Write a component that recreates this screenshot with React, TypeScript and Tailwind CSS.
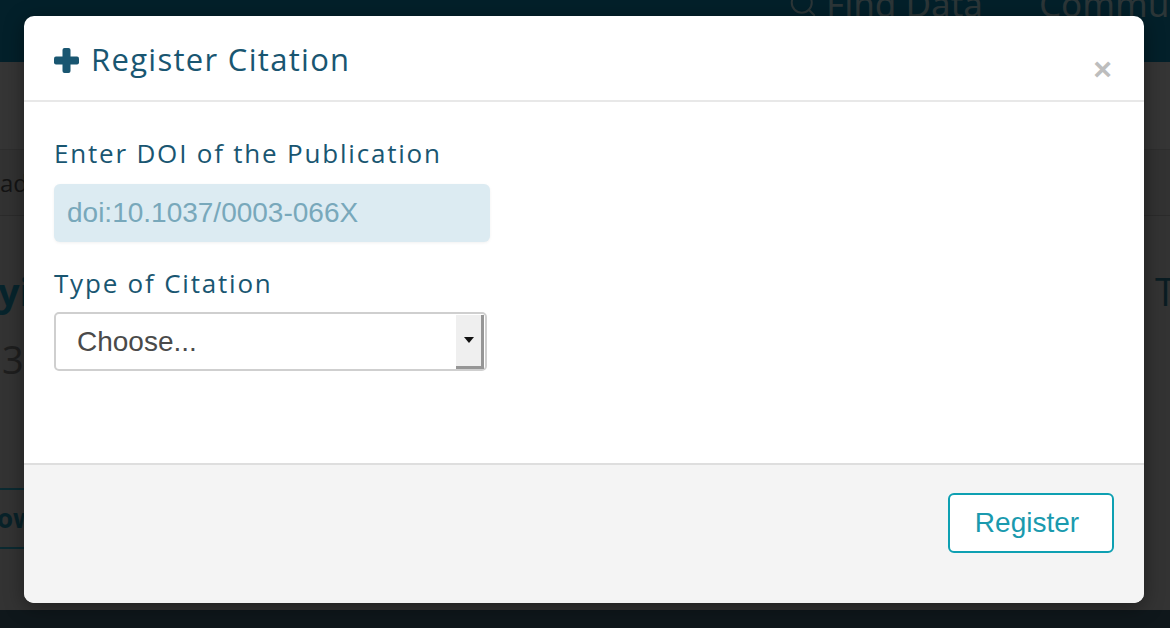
import { Search } from 'lucide-react';

const workSans = { fontFamily: '"Open Sans", "DejaVu Sans", sans-serif' };
const helvetica = { fontFamily: '"Liberation Sans", Arial, sans-serif' };

function PageBehind() {
  return (
    <div className="flex h-full flex-col bg-[#333333]">
      {/* top navbar */}
      <div className="flex h-[62px] shrink-0 items-start justify-end gap-[56px] bg-[#03202a] text-[35px] leading-none text-[#2c3638]">
        <div className="-mt-[14px] flex items-center gap-[8px]">
          <Search className="h-[30px] w-[30px]" strokeWidth={1.6} />
          <span>Find Data</span>
        </div>
        <span className="-mr-[30px] -mt-[14px] whitespace-nowrap">Communi</span>
      </div>
      <div className="h-[88px] shrink-0 border-b border-[#2e2e2e] bg-[#353535]" />
      <div className="flex h-[66px] shrink-0 items-center border-b border-[#2b2b2b] bg-[#323232] text-[24px] text-[#141414]" style={workSans}>
        <span>ad</span>
      </div>
      <div className="flex flex-1 flex-col bg-[#333333]">
        <div className="mt-[56px] flex items-center justify-between text-[38px] font-bold leading-none text-[#07242c]" style={workSans}>
          <span className="-ml-[2px]">yi</span>
          <span className="-mr-[6px] font-normal text-[#0a1c22]">T</span>
        </div>
        <div className="mt-[30px] text-[38px] leading-none text-[#1e1e1e]" style={workSans}>
          <span className="pl-[2px]">3</span>
        </div>
        <div className="mt-[110px] flex h-[61px] w-[200px] items-center border-y-2 border-[#0b2a31] text-[26px] font-bold text-[#082229]" style={workSans}>
          <span className="-ml-[3px]">ow</span>
        </div>
      </div>
      <div className="h-[18px] shrink-0 bg-[#0f171b]" />
    </div>
  );
}

function PlusIcon() {
  return (
    <svg width="25" height="25" viewBox="0 0 25 25" className="shrink-0">
      <rect x="0" y="8.5" width="25" height="8" rx="2" fill="#195671" />
      <rect x="8.5" y="0" width="8" height="25" rx="2" fill="#195671" />
    </svg>
  );
}

function SelectArrow() {
  return (
    <div className="flex h-[54px] w-[28px] items-center justify-center border-r-[3px] border-b-[3px] border-[#969696] bg-[#efefef]">
      <svg width="10" height="6" viewBox="0 0 10 6">
        <path d="M0 0 L10 0 L5 6 Z" fill="#111" />
      </svg>
    </div>
  );
}

export default function App() {
  return (
    <div className="relative h-[628px] w-[1170px] overflow-hidden">
      <PageBehind />
      <div className="absolute left-[24px] top-[16px] flex h-[587px] w-[1120px] flex-col overflow-hidden rounded-[10px] bg-white shadow-[0_4px_20px_rgba(0,0,0,0.4)]">
        {/* header */}
        <div className="flex h-[86px] shrink-0 items-start justify-between border-b-2 border-[#e8e8e8] pl-[30px] pr-[32px]">
          <div
            className="mt-[30px] flex items-center gap-[12px] text-[31px] leading-none tracking-[1.3px] text-[#195671]"
            style={workSans}
          >
            <PlusIcon />
            <span className="-mt-[2px]">Register Citation</span>
          </div>
          <button type="button" className="mt-[37px] text-[32px] font-bold leading-none text-[#bdbdbd]" style={helvetica}>
            ×
          </button>
        </div>

        {/* body */}
        <div className="flex flex-1 flex-col pl-[30px] pt-[38px]">
          <label className="text-[26px] leading-none tracking-[1.8px] text-[#195671]" style={workSans}>
            Enter DOI of the Publication
          </label>
          <input
            readOnly
            placeholder="doi:10.1037/0003-066X"
            className="mt-[18px] h-[58px] w-[436px] rounded-[6px] bg-[#dcebf2] px-[13px] text-[28px] text-[#333] shadow-[0_1px_3px_rgba(0,0,0,0.06)] outline-none placeholder:text-[#78a8bb]"
            style={helvetica}
          />
          <label className="mt-[28px] text-[26px] leading-none tracking-[1.8px] text-[#195671]" style={workSans}>
            Type of Citation
          </label>
          <div
            className="mt-[16px] flex h-[59px] w-[433px] items-center justify-between rounded-[5px] border-2 border-[#cfcfcf] pl-[21px] pr-[1px] text-[28px] text-[#4a4a4a]"
            style={helvetica}
          >
            <span>Choose...</span>
            <SelectArrow />
          </div>
        </div>

        {/* footer */}
        <div className="flex h-[140px] shrink-0 items-start justify-end border-t-2 border-[#dedede] bg-[#f4f4f4] pr-[30px] pt-[28px]">
          <button
            type="button"
            className="h-[60px] w-[166px] rounded-[6px] border-2 border-[#0ea0b2] bg-white pr-[8px] text-[28px] text-[#1a9aae]"
            style={helvetica}
          >
            Register
          </button>
        </div>
      </div>
    </div>
  );
}
